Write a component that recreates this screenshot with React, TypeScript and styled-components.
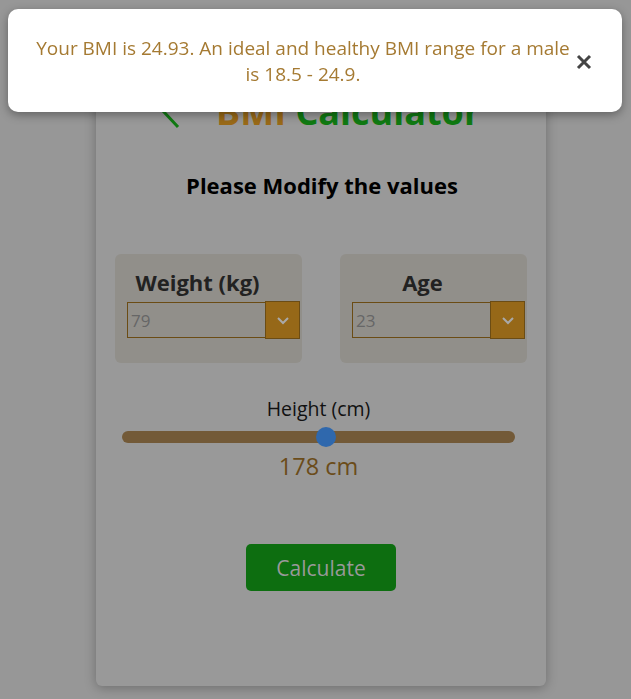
import React, { useState } from "react";
import styled, { createGlobalStyle } from "styled-components";

const Global = createGlobalStyle`
  html, body { margin: 0; padding: 0; }
  body {
    background: #979797;
    font-family: "Open Sans", "Noto Sans", sans-serif;
    min-height: 699px;
    overflow: hidden;
  }
`;

const Page = styled.div`
  display: flex;
  justify-content: center;
  padding: 52px 0 0 11px;
  min-height: 699px;
  box-sizing: border-box;
`;

const Card = styled.div`
  width: 450px;
  height: 634px;
  background: #999999;
  border-radius: 6px;
  box-shadow: 0 2px 12px rgba(0, 0, 0, 0.28);
  display: flex;
  flex-direction: column;
  align-items: stretch;
  box-sizing: border-box;
  padding: 38px 19px 0;
`;

const TitleRow = styled.div`
  display: flex;
  align-items: center;
  height: 44px;
  padding-left: 46px;
  gap: 35px;
`;

const Back = styled.svg`
  width: 20px;
  height: 36px;
  flex: none;
`;

const Title = styled.h1`
  margin: 0;
  font-size: 36px;
  font-weight: 700;
  line-height: 44px;
  color: #107a12;
  white-space: nowrap;
`;

const Gold = styled.span`
  color: #9a6a18;
`;

const Subtitle = styled.h2`
  margin: 38px 0 0;
  text-align: center;
  font-size: 22px;
  font-weight: 700;
  color: #000;
  line-height: 26px;
  padding-left: 2px;
`;

const Fields = styled.div`
  display: grid;
  grid-template-columns: 187px 187px;
  column-gap: 38px;
  margin-top: 56px;
`;

const FieldBox = styled.div`
  background: #918f8a;
  border-radius: 6px;
  height: 109px;
  box-sizing: border-box;
  padding: 15px 2px 0 12px;
  display: flex;
  flex-direction: column;
  align-items: stretch;
`;

const FieldLabel = styled.div`
  font-size: 22px;
  font-weight: 700;
  color: #222;
  line-height: 26px;
  text-align: center;
  padding-right: 32px;
`;

const SelectRow = styled.div`
  display: flex;
  align-items: center;
  margin-top: 6px;
  height: 38px;
`;

const ValueBox = styled.div`
  flex: 1;
  height: 36px;
  box-sizing: border-box;
  border: 1px solid #6b4c14;
  border-right: none;
  display: flex;
  align-items: center;
  padding-left: 3px;
  font-size: 17px;
  color: #666;
`;

const DropBtn = styled.div`
  width: 35px;
  height: 38px;
  box-sizing: border-box;
  background: #966818;
  border: 1px solid #6b4c14;
  display: flex;
  align-items: center;
  justify-content: center;
`;

const SliderWrap = styled.div`
  margin: 34px 12px 0 7px;
  display: flex;
  flex-direction: column;
  align-items: center;
`;

const SliderLabel = styled.div`
  font-size: 19.5px;
  color: #111;
  line-height: 24px;
`;

const Range = styled.input`
  -webkit-appearance: none;
  appearance: none;
  width: 393px;
  height: 12px;
  margin: 10px 0 0;
  border-radius: 6px;
  background: #735a38;
  outline: none;
  &::-webkit-slider-thumb {
    -webkit-appearance: none;
    appearance: none;
    width: 20px;
    height: 20px;
    border-radius: 50%;
    background: #2f68ad;
    border: none;
  }
`;

const SliderValue = styled.div`
  margin-top: 8px;
  font-size: 23.5px;
  color: #6b4c1a;
  line-height: 30px;
`;

const CalcButton = styled.button`
  align-self: center;
  margin: 63px 0 0;
  width: 150px;
  height: 47px;
  border: none;
  border-radius: 5px;
  background: #0d6e10;
  color: #999;
  font-family: inherit;
  font-size: 21px;
`;

const Toast = styled.div`
  position: fixed;
  top: 9px;
  left: 8px;
  width: 614px;
  height: 103px;
  background: #fff;
  border-radius: 10px;
  box-shadow: 0 3px 10px rgba(0, 0, 0, 0.35);
  display: flex;
  align-items: center;
  box-sizing: border-box;
  padding: 0 30px 0 25px;
`;

const ToastText = styled.div`
  flex: 1;
  text-align: center;
  font-size: 19px;
  line-height: 26px;
  color: #a57a32;
`;

const Close = styled.svg`
  width: 16px;
  height: 16px;
  flex: none;
  margin-left: 3px;
  margin-top: 3px;
`;

function Chevron() {
  return (
    <svg width="14" height="9" viewBox="0 0 14 9">
      <path d="M2 2 L7 7 L12 2" fill="none" stroke="#a9a9a9" strokeWidth="2" />
    </svg>
  );
}

export default function App() {
  const [height, setHeight] = useState(178);
  return (
    <>
      <Global />
      <Page>
        <Card>
          <TitleRow>
            <Back viewBox="0 0 20 36">
              <path d="M17 3 L3 18 L17 33" fill="none" stroke="#107a12" strokeWidth="3" />
            </Back>
            <Title>
              <Gold>BMI</Gold> Calculator
            </Title>
          </TitleRow>
          <Subtitle>Please Modify the values</Subtitle>
          <Fields>
            <FieldBox>
              <FieldLabel>Weight (kg)</FieldLabel>
              <SelectRow>
                <ValueBox>79</ValueBox>
                <DropBtn>
                  <Chevron />
                </DropBtn>
              </SelectRow>
            </FieldBox>
            <FieldBox>
              <FieldLabel>Age</FieldLabel>
              <SelectRow>
                <ValueBox>23</ValueBox>
                <DropBtn>
                  <Chevron />
                </DropBtn>
              </SelectRow>
            </FieldBox>
          </Fields>
          <SliderWrap>
            <SliderLabel>Height (cm)</SliderLabel>
            <Range
              type="range"
              min={100}
              max={250}
              value={height}
              onChange={(e) => setHeight(Number(e.target.value))}
            />
            <SliderValue>{height} cm</SliderValue>
          </SliderWrap>
          <CalcButton>Calculate</CalcButton>
        </Card>
      </Page>
      <Toast>
        <ToastText>
          Your BMI is 24.93. An ideal and healthy BMI range for a male is 18.5 - 24.9.
        </ToastText>
        <Close viewBox="0 0 16 16">
          <path d="M2 2 L14 14 M14 2 L2 14" stroke="#444" strokeWidth="3" />
        </Close>
      </Toast>
    </>
  );
}
